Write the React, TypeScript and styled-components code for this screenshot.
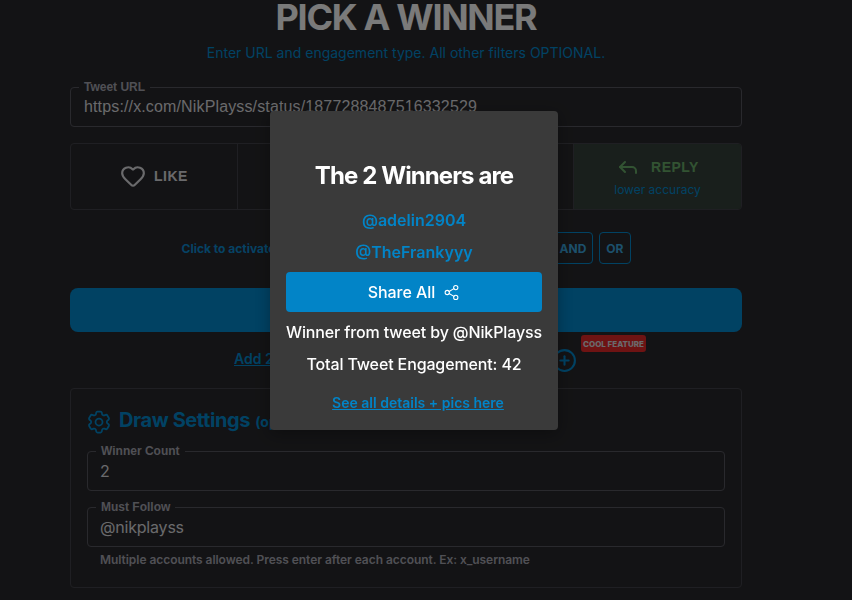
import React from 'react'
import styled, { createGlobalStyle } from 'styled-components'
import { CirclePlus, Heart, Reply, Share2 } from 'lucide-react'
import { HiOutlineCog6Tooth } from 'react-icons/hi2'

const GlobalStyle = createGlobalStyle`
  html, body {
    margin: 0;
    height: 600px;
    overflow: hidden;
    background: #27272a;
  }
  * { box-sizing: border-box; }
`

const Page = styled.div`
  width: 812px;
  height: 600px;
  overflow: hidden;
  font-family: Inter, 'Liberation Sans', sans-serif;
`

const Content = styled.main`
  width: 672px;
  margin: 0 auto;
  display: flex;
  flex-direction: column;
`

const Title = styled.h1`
  margin: 0;
  height: 36px;
  font-size: 36px;
  line-height: 35px;
  font-weight: 700;
  letter-spacing: -1.3px;
  text-align: center;
  color: #f4f4f5;
`

const Subtitle = styled.p`
  margin: 7px 0 0;
  height: 20px;
  font-size: 14px;
  line-height: 20px;
  text-align: center;
  color: #0284c7;
`

const Field = styled.fieldset<{ $mt: number }>`
  margin: ${p => p.$mt}px 0 0;
  padding: 0 12px 0 8px;
  height: 47px;
  border: 1px solid #52525b;
  border-radius: 4px;
  min-width: 0;
`

const Legend = styled.legend`
  margin-left: 0;
  padding: 0 5px;
  height: 14px;
  font-family: 'Liberation Sans', sans-serif;
  font-size: 12px;
  line-height: 14px;
  font-weight: 700;
  color: #a1a1aa;
`

const FieldText = styled.div<{ $inter?: boolean }>`
  margin-left: ${p => (p.$inter ? 4 : 5)}px;
  padding-top: 1px;
  font-family: ${p => (p.$inter ? 'Inter' : "'Liberation Sans'")}, sans-serif;
  font-size: 16px;
  line-height: 24px;
  letter-spacing: ${p => (p.$inter ? -0.2 : 0.14)}px;
  color: #d4d4d8;
`

const EngagementRow = styled.div`
  margin-top: 16px;
  height: 67px;
  display: grid;
  grid-template-columns: 167px 168px 168px 1fr;
  border: 1px solid #3f3f46;
  border-radius: 4px;
`

const EngagementCell = styled.div<{ $active?: boolean }>`
  display: flex;
  flex-direction: column;
  align-items: center;
  justify-content: center;
  gap: 3px;
  border-radius: ${p => (p.$active ? '0 3px 3px 0' : '0')};
  background: ${p => (p.$active ? '#333f38' : 'transparent')};
  border-right: ${p => (p.$active ? 'none' : '1px solid #3f3f46')};
`

const EngagementLabel = styled.div<{ $active?: boolean }>`
  display: flex;
  align-items: center;
  gap: ${p => (p.$active ? 11 : 8)}px;
  margin-top: ${p => (p.$active ? 0 : -2)}px;
  font-family: 'Liberation Sans', Inter, sans-serif;
  font-size: 14px;
  line-height: 20px;
  font-weight: 700;
  letter-spacing: 0.5px;
  color: ${p => (p.$active ? '#65a665' : '#d4d4d8')};
`

const Accuracy = styled.div`
  font-size: 12px;
  line-height: 16px;
  color: #0284c7;
`

const LogicRow = styled.div`
  width: 449px;
  margin: 22px auto 0;
  display: flex;
  align-items: center;
  justify-content: space-between;
`

const LogicHint = styled.span`
  font-size: 12px;
  font-weight: 700;
  color: #0c85c9;
`

const LogicButtons = styled.div`
  display: flex;
  gap: 6px;
`

const LogicButton = styled.div`
  height: 32px;
  padding: 0 6px;
  display: flex;
  align-items: center;
  border: 1px solid #0284c7;
  border-radius: 4px;
  font-size: 12px;
  font-weight: 700;
  color: #38a0d8;
`

const DrawButton = styled.div`
  margin-top: 24px;
  height: 44px;
  border-radius: 8px;
  background: #0284c7;
`

const AddRow = styled.div`
  position: relative;
  width: 342px;
  margin: 16px auto 0;
  height: 24px;
  display: flex;
  align-items: center;
  justify-content: space-between;
  color: #0284c7;
`

const AddLink = styled.a`
  margin: 0 0 3px -1px;
  font-size: 14px;
  font-weight: 600;
  text-decoration: underline;
  color: #0284c7;
`

const CoolBadge = styled.span`
  position: absolute;
  left: 346px;
  top: -13px;
  height: 17px;
  padding: 0 2px;
  display: flex;
  align-items: center;
  border-radius: 3px;
  background: #dc2626;
  font-size: 8px;
  font-weight: 800;
  white-space: nowrap;
  color: #d4d4d8;
`

const SettingsCard = styled.section`
  margin-top: 16px;
  height: 200px;
  padding: 19px 16px 0;
  border: 1px solid #3f3f46;
  border-radius: 4px;
`

const SettingsHeading = styled.div`
  display: flex;
  align-items: baseline;
  color: #0284c7;
  height: 24px;
  margin-bottom: 12px;

  svg {
    align-self: center;
    margin: 4px 6px 0 -2px;
  }
`

const SettingsTitle = styled.h2`
  margin: 0;
  font-size: 20px;
  line-height: 24px;
  font-weight: 700;
  letter-spacing: -0.4px;
`

const Optional = styled.span`
  margin-left: 5px;
  font-size: 14px;
  font-weight: 700;
`

const Hint = styled.p`
  margin: 5px 0 0 13px;
  font-size: 12px;
  line-height: 16px;
  font-weight: 600;
  letter-spacing: -0.05px;
  color: #a1a1aa;
`

const Overlay = styled.div`
  position: fixed;
  inset: 0;
  background: rgba(0, 0, 0, 0.5);
`

const Modal = styled.div`
  position: absolute;
  left: 270px;
  top: 111px;
  width: 288px;
  height: 319px;
  padding: 49px 16px 0;
  display: flex;
  flex-direction: column;
  align-items: center;
  border-radius: 4px;
  background: #3a3a3a;
  box-shadow: 0 4px 16px rgba(0, 0, 0, 0.3);
  font-family: Inter, sans-serif;
`

const ModalTitle = styled.h3`
  margin: 0 0 12px;
  font-size: 24px;
  line-height: 32px;
  font-weight: 700;
  letter-spacing: -0.9px;
  white-space: nowrap;
  color: #fff;
`

const WinnerName = styled.a`
  height: 32px;
  font-size: 16px;
  line-height: 32px;
  font-weight: 600;
  color: #0284c7;
`

const ShareButton = styled.button`
  width: 100%;
  height: 40px;
  margin: 4px 0 8px;
  display: flex;
  align-items: center;
  justify-content: center;
  gap: 8px;
  border: none;
  border-radius: 4px;
  background: #0284c7;
  font-family: inherit;
  font-size: 16px;
  font-weight: 500;
  letter-spacing: -0.05px;
  color: #fff;
`

const ModalLine = styled.p`
  margin: 0;
  height: 32px;
  font-size: 16px;
  line-height: 24px;
  font-weight: 500;
  letter-spacing: -0.13px;
  white-space: nowrap;
  color: #fff;
`

const DetailsLink = styled.a`
  margin: 9px 0 0 8px;
  font-size: 14px;
  line-height: 20px;
  font-weight: 600;
  text-decoration: underline;
  color: #0284c7;
`

export default function App() {
  return (
    <>
      <GlobalStyle />
      <Page>
        <Content>
          <Title>PICK A WINNER</Title>
          <Subtitle>Enter URL and engagement type. All other filters OPTIONAL.</Subtitle>
          <Field $mt={17}>
            <Legend>Tweet URL</Legend>
            <FieldText>https://x.com/NikPlayss/status/1877288487516332529</FieldText>
          </Field>
          <EngagementRow>
            <EngagementCell>
              <EngagementLabel>
                <Heart size={26} strokeWidth={2} />
                LIKE
              </EngagementLabel>
            </EngagementCell>
            <EngagementCell />
            <EngagementCell />
            <EngagementCell $active>
              <EngagementLabel $active>
                <Reply size={24} strokeWidth={2} />
                REPLY
              </EngagementLabel>
              <Accuracy>lower accuracy</Accuracy>
            </EngagementCell>
          </EngagementRow>
          <LogicRow>
            <LogicHint>Click to activate</LogicHint>
            <LogicButtons>
              <LogicButton>AND</LogicButton>
              <LogicButton>OR</LogicButton>
            </LogicButtons>
          </LogicRow>
          <DrawButton />
          <AddRow>
            <AddLink>Add 2nd</AddLink>
            <CirclePlus size={25} strokeWidth={2} />
            <CoolBadge>COOL FEATURE</CoolBadge>
          </AddRow>
          <SettingsCard>
            <SettingsHeading>
              <HiOutlineCog6Tooth size={28} />
              <SettingsTitle>Draw Settings</SettingsTitle>
              <Optional>(optional)</Optional>
            </SettingsHeading>
            <Field $mt={0}>
              <Legend>Winner Count</Legend>
              <FieldText $inter>2</FieldText>
            </Field>
            <Field $mt={9}>
              <Legend>Must Follow</Legend>
              <FieldText $inter>@nikplayss</FieldText>
            </Field>
            <Hint>Multiple accounts allowed. Press enter after each account. Ex: x_username</Hint>
          </SettingsCard>
        </Content>
      </Page>
      <Overlay>
        <Modal>
          <ModalTitle>The 2 Winners are</ModalTitle>
          <WinnerName>@adelin2904</WinnerName>
          <WinnerName>@TheFrankyyy</WinnerName>
          <ShareButton>
            Share All
            <Share2 size={17} strokeWidth={1.5} />
          </ShareButton>
          <ModalLine>Winner from tweet by @NikPlayss</ModalLine>
          <ModalLine>Total Tweet Engagement: 42</ModalLine>
          <DetailsLink>See all details + pics here</DetailsLink>
        </Modal>
      </Overlay>
    </>
  )
}
